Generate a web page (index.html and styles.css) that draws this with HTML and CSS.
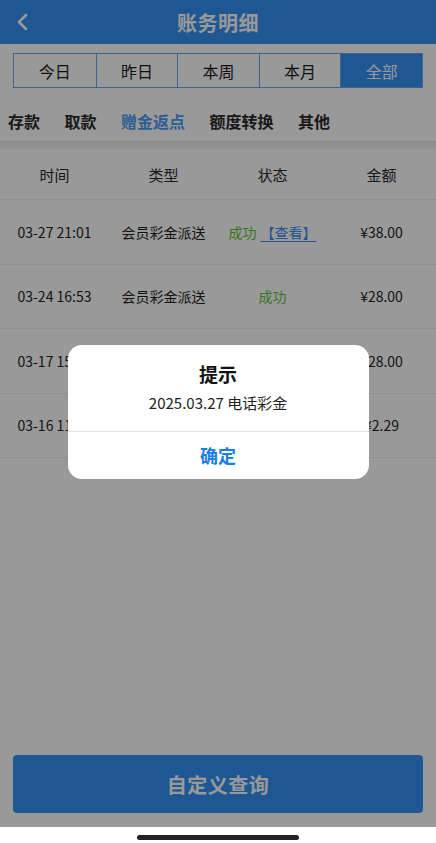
FILE: index.html
```html
<!DOCTYPE html>
<html lang="zh-CN">
<head>
<meta charset="utf-8">
<title>账务明细</title>
<link rel="stylesheet" href="styles.css">
</head>
<body>
<div class="screen">
  <div class="app">
    <header class="nav">
      <span class="back">
        <svg width="14" height="18" viewBox="0 0 14 18"><path d="M10 2 L3 9 L10 16" fill="none" stroke="#fff" stroke-width="2.6" stroke-linecap="round" stroke-linejoin="round"/></svg>
      </span>
      <h1 class="title">账务明细</h1>
    </header>

    <div class="tabs">
      <div class="tab">今日</div>
      <div class="tab">昨日</div>
      <div class="tab">本周</div>
      <div class="tab">本月</div>
      <div class="tab active">全部</div>
    </div>

    <div class="cats">
      <span class="cat">存款</span>
      <span class="cat">取款</span>
      <span class="cat active">赠金返点</span>
      <span class="cat">额度转换</span>
      <span class="cat">其他</span>
    </div>
    <div class="sep"></div>

    <div class="table">
      <div class="row head">
        <span>时间</span><span>类型</span><span>状态</span><span>金额</span>
      </div>
      <div class="row">
        <span>03-27 21:01</span><span>会员彩金派送</span><span><em class="ok">成功</em><a class="view">【查看】</a></span><span>¥38.00</span>
      </div>
      <div class="row">
        <span>03-24 16:53</span><span>会员彩金派送</span><span><em class="ok">成功</em></span><span>¥28.00</span>
      </div>
      <div class="row">
        <span>03-17 15:58</span><span>会员彩金派送</span><span><em class="ok">成功</em></span><span>¥28.00</span>
      </div>
      <div class="row">
        <span>03-16 11:30</span><span>会员彩金派送</span><span><em class="ok">成功</em></span><span>¥2.29</span>
      </div>
    </div>

    <div class="spacer"></div>

    <div class="footer">
      <button class="query">自定义查询</button>
    </div>

    <div class="mask">
      <div class="dialog">
        <div class="dlg-body">
          <div class="dlg-title">提示</div>
          <div class="dlg-msg">2025.03.27 电话彩金</div>
        </div>
        <div class="dlg-btn">确定</div>
      </div>
    </div>
  </div>
  <div class="home">
    <span class="indicator"></span>
  </div>
</div>
</body>
</html>
```

FILE: styles.css
```css
* { box-sizing: border-box; margin: 0; padding: 0; }
html, body { width: 100%; height: 100%; }
body {
  font-family: "Noto Sans CJK SC", "Noto Sans", sans-serif;
  background: #fff;
  color: #222;
}
.screen { height: 843px; display: flex; flex-direction: column; }
.app {
  position: relative;
  height: 827px;
  display: flex;
  flex-direction: column;
  background: #fff;
}
.nav {
  height: 44px;
  background: #3592f6;
  display: flex;
  align-items: center;
  justify-content: center;
  position: relative;
}
.back {
  position: absolute;
  left: 16px;
  top: 13px;
  display: flex;
}
.title {
  font-size: 20px;
  font-weight: 700;
  color: #fff;
  letter-spacing: 0.5px;
}
.tabs {
  margin: 9px 13px 0 13px;
  height: 35px;
  display: grid;
  grid-template-columns: repeat(5, 1fr);
  border: 1px solid #6aa5ea;
}
.tab {
  display: flex;
  align-items: center;
  justify-content: center;
  font-size: 16px;
  color: #1c1c1c;
  border-left: 1px solid #6aa5ea;
}
.tab:first-child { border-left: none; }
.tab.active { background: #3592f6; color: #fff; }
.cats {
  margin-top: 13px;
  height: 40px;
  padding-left: 8px;
  display: flex;
  align-items: center;
  gap: 24.5px;
}
.sep {
  height: 9px;
  background: linear-gradient(#e9e9e9, #f2f2f2 60%, #f8f8f8);
}
.cat {
  font-size: 16px;
  font-weight: 700;
  color: #2a2a2a;
}
.cat.active { color: #4d9cf6; }
.table { display: flex; flex-direction: column; }
.row {
  display: grid;
  grid-template-columns: repeat(4, 1fr);
  height: 64.5px;
  align-items: center;
  border-bottom: 1px solid #f0f0f0;
  font-size: 14px;
  color: #1e1e1e;
}
.row > span { text-align: center; white-space: nowrap; }
.row.head { height: 50px; font-size: 15px; color: #2a2a2a; }
.ok { font-style: normal; color: #62c22c; }
.view {
  margin-left: 4px;
  color: #3b8df5;
  text-decoration: underline;
  text-underline-offset: 3px;
}
.spacer { flex: 1; }
.footer { padding: 0 13px 14px 13px; }
.query {
  width: 100%;
  height: 58px;
  border: none;
  border-radius: 4px;
  background: #3592f6;
  color: #fff;
  font-family: "Noto Sans CJK SC", sans-serif;
  font-size: 20px;
  font-weight: 700;
  letter-spacing: 0.5px;
}
.mask {
  position: absolute;
  inset: 0;
  background: rgba(0,0,0,0.4);
  display: flex;
  align-items: center;
  justify-content: center;
  padding-bottom: 4px;
}
.dialog {
  width: 301px;
  background: #fff;
  border-radius: 14px;
  overflow: hidden;
}
.dlg-body {
  padding: 17px 12px 17px 12px;
  text-align: center;
}
.dlg-title {
  font-size: 19px;
  line-height: 24px;
  font-weight: 700;
  color: #111;
}
.dlg-msg {
  margin-top: 6px;
  font-size: 15px;
  line-height: 22px;
  color: #222;
}
.dlg-btn {
  height: 48px;
  border-top: 1px solid #e2e2e2;
  display: flex;
  align-items: center;
  justify-content: center;
  font-size: 18px;
  font-weight: 700;
  color: #1b7fe6;
}
.home {
  height: 16px;
  background: #fff;
  display: flex;
  justify-content: center;
  align-items: flex-start;
  padding-top: 8px;
}
.indicator {
  width: 162px;
  height: 5px;
  border-radius: 3px;
  background: #232323;
}
```
